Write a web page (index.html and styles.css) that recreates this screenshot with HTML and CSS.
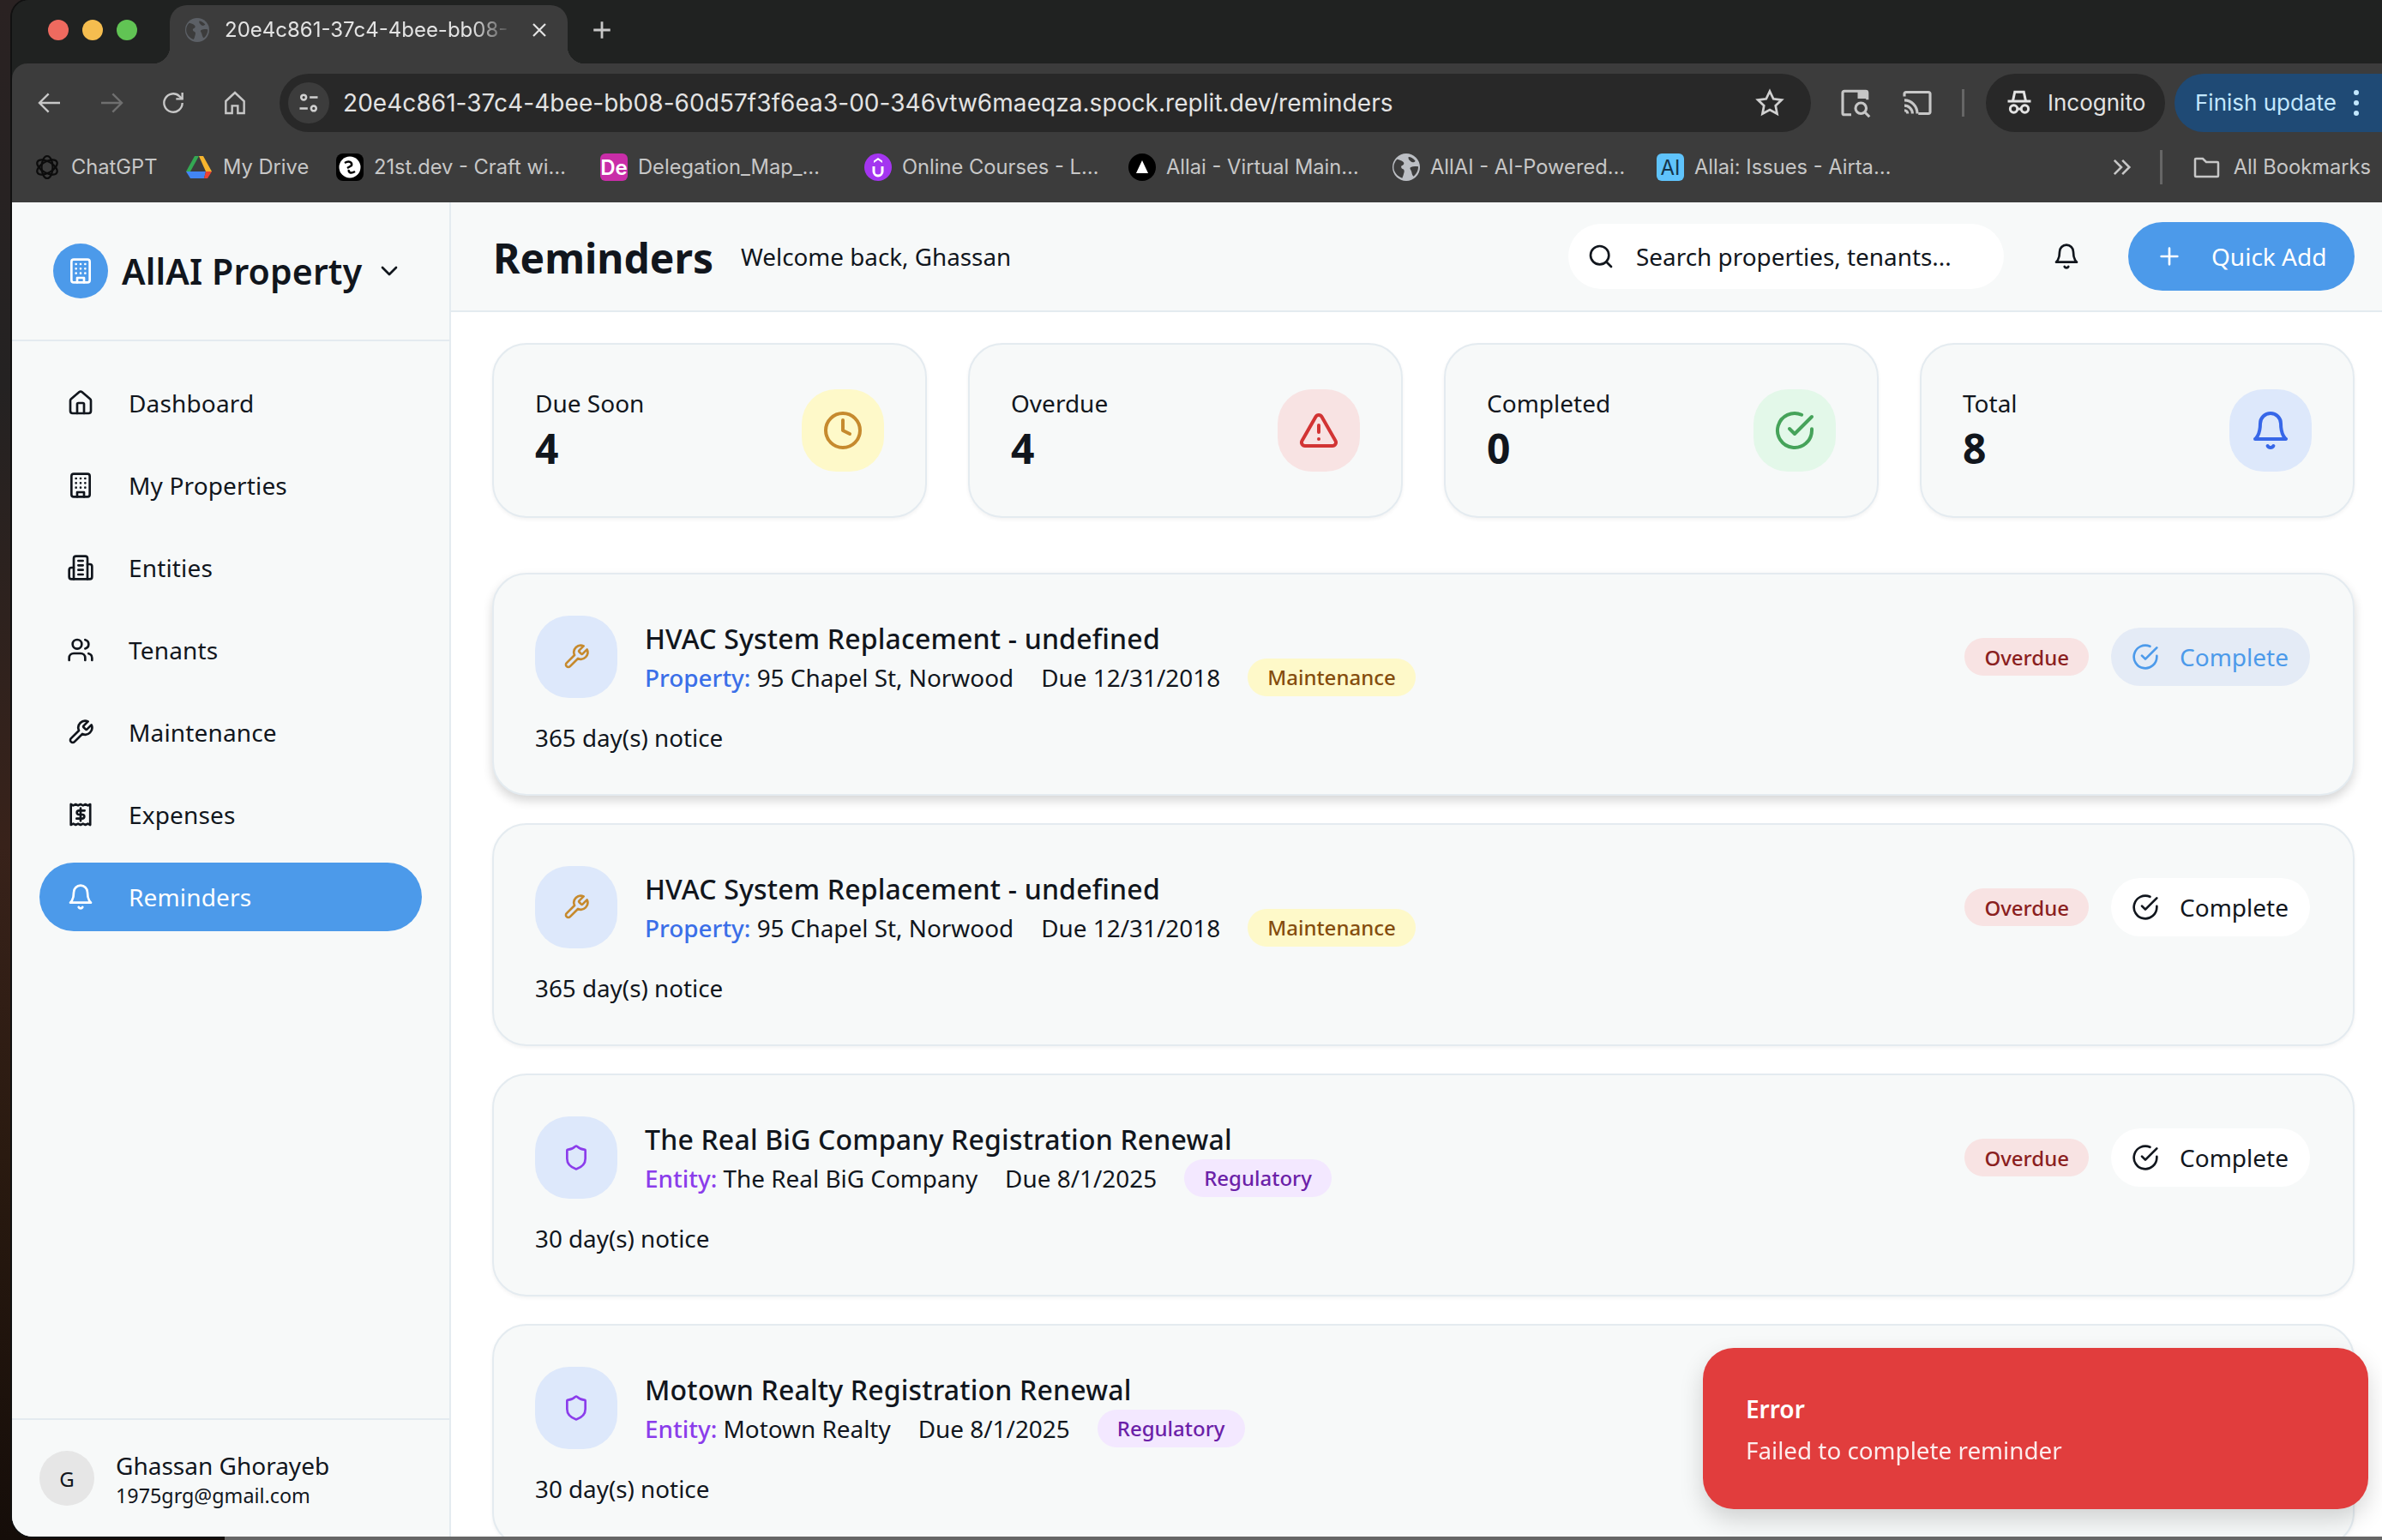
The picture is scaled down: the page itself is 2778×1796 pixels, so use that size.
FILE: index.html
```html
<!DOCTYPE html>
<html lang="en">
<head>
    <meta charset="utf-8">
    <title>Reminders</title>
    <link rel="stylesheet" href="styles.css">
</head>
<body>
<svg class="sprites" aria-hidden="true">
    <symbol id="i-home" viewBox="0 0 24 24"><path d="M15 21v-8a1 1 0 0 0-1-1h-4a1 1 0 0 0-1 1v8"/><path d="M3 10a2 2 0 0 1 .709-1.528l7-5.999a2 2 0 0 1 2.582 0l7 5.999A2 2 0 0 1 21 10v9a2 2 0 0 1-2 2H5a2 2 0 0 1-2-2z"/></symbol>
    <symbol id="i-building" viewBox="0 0 24 24"><rect x="4" y="2" width="16" height="20" rx="2"/><path d="M9 22v-4h6v4"/><path d="M8 6h.01M12 6h.01M16 6h.01M8 10h.01M12 10h.01M16 10h.01M8 14h.01M12 14h.01M16 14h.01"/></symbol>
    <symbol id="i-entities" viewBox="0 0 24 24"><path d="M6 22V4a2 2 0 0 1 2-2h8a2 2 0 0 1 2 2v18Z"/><path d="M6 12H4a2 2 0 0 0-2 2v6a2 2 0 0 0 2 2h2"/><path d="M18 9h2a2 2 0 0 1 2 2v9a2 2 0 0 1-2 2h-2"/><path d="M10 6h4M10 10h4M10 14h4M10 18h4"/></symbol>
    <symbol id="i-users" viewBox="0 0 24 24"><path d="M16 21v-2a4 4 0 0 0-4-4H6a4 4 0 0 0-4 4v2"/><circle cx="9" cy="7" r="4"/><path d="M22 21v-2a4 4 0 0 0-3-3.87"/><path d="M16 3.13a4 4 0 0 1 0 7.75"/></symbol>
    <symbol id="i-wrench" viewBox="0 0 24 24"><path d="M14.7 6.3a1 1 0 0 0 0 1.4l1.6 1.6a1 1 0 0 0 1.4 0l3.77-3.77a6 6 0 0 1-7.94 7.94l-6.91 6.91a2.12 2.12 0 0 1-3-3l6.91-6.91a6 6 0 0 1 7.94-7.94l-3.76 3.76z"/></symbol>
    <symbol id="i-receipt" viewBox="0 0 24 24"><path d="M3.500 3v18l2.100-1 2.100 1 2.100-1 2.200 1 2.100-1 2.100 1 2.100-1 2.100 1V3l-2.100 1-2.100-1-2.100 1-2.100-1-2.200 1-2.100-1-2.100 1z"/><path d="M15.500 8.500h-5a1.750 1.750 0 0 0 0 3.500h3a1.750 1.750 0 0 1 0 3.500h-5"/><path d="M12 6.500v11"/></symbol>
    <symbol id="i-bell" viewBox="0 0 24 24"><path d="M6 8a6 6 0 0 1 12 0c0 7 3 9 3 9H3s3-2 3-9"/><path d="M10.300 21a1.940 1.940 0 0 0 3.400 0"/></symbol>
    <symbol id="i-clock" viewBox="0 0 24 24"><circle cx="12" cy="12" r="10"/><path d="M12 6v6l4 2"/></symbol>
    <symbol id="i-alert" viewBox="0 0 24 24"><path d="m21.730 18-8-14a2 2 0 0 0-3.480 0l-8 14A2 2 0 0 0 4 21h16a2 2 0 0 0 1.730-3"/><path d="M12 9v4"/><path d="M12 17h.01"/></symbol>
    <symbol id="i-check" viewBox="0 0 24 24"><path d="M22 11.080V12a10 10 0 1 1-5.930-9.140"/><path d="m9 11 3 3L22 4"/></symbol>
    <symbol id="i-shield" viewBox="0 0 24 24"><path d="M20 13c0 5-3.500 7.500-7.660 8.950a1 1 0 0 1-.67-.01C7.500 20.500 4 18 4 13V6a1 1 0 0 1 1-1c2 0 4.500-1.200 6.240-2.720a1.170 1.170 0 0 1 1.520 0C14.510 3.810 17 5 19 5a1 1 0 0 1 1 1z"/></symbol>
    <symbol id="i-search" viewBox="0 0 24 24"><circle cx="11" cy="11" r="8"/><path d="m21 21-4.300-4.300"/></symbol>
    <symbol id="i-plus" viewBox="0 0 24 24"><path d="M5 12h14M12 5v14"/></symbol>
    <symbol id="i-chevron" viewBox="0 0 24 24"><path d="m6 9 6 6 6-6"/></symbol>
    <symbol id="i-globe" viewBox="0 0 24 24"><circle cx="12" cy="12" r="12" fill="currentColor" stroke="none"/><path fill="#3c3c3c" stroke="none" d="M4 5c2 .5 4 1 5.500 2.500 1 1 .5 2.500-1 3-1.500.5-1 2.500.5 3 1.500.6 1.500 2 1 3.500-.4 1.500-.8 3-1.500 4.500C4 20 1 16 1 12c0-2.500 1-5 3-7zM14 3c2 0 4.500 1.500 6 3.500-1 1.500-3 1.500-4 .5-1-1-2.500-2-2-4zM16 12c2-1 4-1 6.500-.5.200 3-1.500 6.500-4 8.500-1.500-1-1.500-3-2-4.500-.5-1.500-2-2.500-.5-3.500z"/></symbol>
</svg>

<div class="window">
    <div class="tabstrip">
        <div class="lights">
            <span class="light red"></span>
            <span class="light yellow"></span>
            <span class="light green"></span>
        </div>
        <div class="tab">
            <svg class="tab-fav"><use href="#i-globe"/></svg>
            <span class="tab-title">20e4c861-37c4-4bee-bb08-</span>
            <svg class="tab-close" viewBox="0 0 24 24"><path d="M5 5l14 14M19 5 5 19"/></svg>
        </div>
        <svg class="tab-new" viewBox="0 0 24 24"><path d="M12 3v18M3 12h18"/></svg>
    </div>

    <div class="toolbar">
        <svg class="tool" viewBox="0 0 24 24"><path d="M21 12H4M11 4l-8 8 8 8"/></svg>
        <svg class="tool tool-off" viewBox="0 0 24 24"><path d="M3 12h17M13 4l8 8-8 8"/></svg>
        <svg class="tool" viewBox="0 0 24 24"><path d="M20 12a8 8 0 1 1-2.500-5.800L20 8.500"/><path d="M20 3v5.500h-5.500"/></svg>
        <svg class="tool" viewBox="0 0 24 24"><path d="M4 10.500 12 3l8 7.500V21h-5.500v-6.500h-5V21H4z"/></svg>
        <div class="omnibox">
            <span class="site-info">
                <svg viewBox="0 0 24 24"><circle cx="7" cy="6.500" r="2.500"/><path d="M13 6.500h8M3 17.500h8"/><circle cx="17" cy="17.500" r="2.500"/></svg>
            </span>
            <span class="url">20e4c861-37c4-4bee-bb08-60d57f3f6ea3-00-346vtw6maeqza.spock.replit.dev/reminders</span>
            <svg class="star" viewBox="0 0 24 24"><path d="m12 3 2.800 5.900 6.400.8-4.700 4.400 1.200 6.400L12 17.400l-5.700 3.100 1.200-6.400-4.700-4.400 6.400-.8z"/></svg>
        </div>
        <svg class="tool-wide" viewBox="0 0 32 32"><path d="M12 27H5.500A1.500 1.500 0 0 1 4 25.500v-19A1.500 1.500 0 0 1 5.500 5h20A1.500 1.500 0 0 1 27 6.500V13"/><path d="M18 5h9v7h-9z" fill="currentColor" stroke="none"/><circle cx="21" cy="21" r="5"/><path d="m25 25 4 4"/></svg>
        <svg class="tool-wide" viewBox="0 0 32 32"><path d="M4 10V7.500A1.500 1.500 0 0 1 5.500 6h21A1.500 1.500 0 0 1 28 7.500v17a1.500 1.500 0 0 1-1.500 1.500H17"/><path d="M4 13.500c6.500 0 12 5.500 12 12.500M4 18.500c4 0 7.500 3.500 7.500 7.500M4 23c1.700 0 3 1.400 3 3"/></svg>
        <span class="tool-divider"></span>
        <div class="incognito">
            <svg viewBox="0 0 24 24"><path d="M3 10.700h18"/><path d="M7 10.500 8.500 3.500h7L17 10.500"/><circle cx="7.700" cy="16.700" r="2.800"/><circle cx="16.300" cy="16.700" r="2.800"/><path d="M10.500 16.700h3"/></svg>
            <span>Incognito</span>
        </div>
        <div class="update">
            <span>Finish update</span>
            <span class="update-dots"><i></i><i></i><i></i></span>
        </div>
    </div>

    <div class="bookmarks">
        <div class="bm bm-chatgpt">
            <svg class="bm-ico" viewBox="0 0 32 32"><g fill="none" stroke="#0c0c0c" stroke-width="2.200"><ellipse cx="16" cy="16" rx="6.500" ry="13"/><ellipse cx="16" cy="16" rx="6.500" ry="13" transform="rotate(60 16 16)"/><ellipse cx="16" cy="16" rx="6.500" ry="13" transform="rotate(120 16 16)"/></g></svg>
            <span>ChatGPT</span>
        </div>
        <div class="bm bm-drive">
            <svg class="bm-ico" viewBox="0 0 32 32"><path fill="#34a853" d="M11 3h5L6 21H1z"/><path fill="#f6b52e" d="M16 3h5l10 18h-7z"/><path fill="#4285f4" d="M6 21h18l-2 8H6l-5-8z"/><path fill="#ea4335" d="M24 21h7l-5 8h-4z"/></svg>
            <span>My Drive</span>
        </div>
        <div class="bm bm-wide">
            <svg class="bm-ico" viewBox="0 0 32 32"><rect width="32" height="32" rx="8" fill="#000"/><circle cx="16" cy="16" r="12.500" fill="#fff"/><path d="M10 11c5-3 9-1 8 3l-5 3M22 21c-5 3-8 1-7-2" fill="none" stroke="#000" stroke-width="2.500"/></svg>
            <span>21st.dev - Craft wi…</span>
        </div>
        <div class="bm bm-wide">
            <span class="bm-ico bm-de">De</span>
            <span>Delegation_Map_…</span>
        </div>
        <div class="bm bm-wide">
            <svg class="bm-ico" viewBox="0 0 32 32"><circle cx="16" cy="16" r="16" fill="#a435f0"/><path d="M11 15v6a5 5 0 0 0 10 0v-6" fill="none" stroke="#fff" stroke-width="3"/><path d="m16 5 5 3.500v2.500l-5-3.500-5 3.500V8.500z" fill="#fff"/></svg>
            <span>Online Courses - L…</span>
        </div>
        <div class="bm bm-wide">
            <svg class="bm-ico" viewBox="0 0 32 32"><circle cx="16" cy="16" r="16" fill="#000"/><path d="m16 8 7 15H9z" fill="#fff"/></svg>
            <span>Allai - Virtual Main…</span>
        </div>
        <div class="bm bm-wide">
            <svg class="bm-ico bm-globe"><use href="#i-globe"/></svg>
            <span>AllAI - AI-Powered…</span>
        </div>
        <div class="bm bm-wide">
            <span class="bm-ico bm-ai">AI</span>
            <span>Allai: Issues - Airta…</span>
        </div>
        <svg class="bm-more" viewBox="0 0 24 24"><path d="m5 5 7 7-7 7M13 5l7 7-7 7"/></svg>
        <span class="bm-divider"></span>
        <div class="bm bm-all">
            <svg class="bm-folder" viewBox="0 0 32 32"><path d="M3 26V7a1 1 0 0 1 1-1h8l4 4h13a1 1 0 0 1 1 1v15a1 1 0 0 1-1 1H4a1 1 0 0 1-1-1z"/></svg>
            <span>All Bookmarks</span>
        </div>
    </div>

    <div class="app">
        <aside class="sidebar">
            <div class="brand">
                <span class="brand-logo"><svg class="ico"><use href="#i-building"/></svg></span>
                <span class="brand-name">AllAI Property</span>
                <svg class="ico brand-chev"><use href="#i-chevron"/></svg>
            </div>
            <nav class="nav">
                <a class="nav-item"><svg class="ico"><use href="#i-home"/></svg>Dashboard</a>
                <a class="nav-item"><svg class="ico"><use href="#i-building"/></svg>My Properties</a>
                <a class="nav-item"><svg class="ico"><use href="#i-entities"/></svg>Entities</a>
                <a class="nav-item"><svg class="ico"><use href="#i-users"/></svg>Tenants</a>
                <a class="nav-item"><svg class="ico"><use href="#i-wrench"/></svg>Maintenance</a>
                <a class="nav-item"><svg class="ico"><use href="#i-receipt"/></svg>Expenses</a>
                <a class="nav-item active"><svg class="ico"><use href="#i-bell"/></svg>Reminders</a>
            </nav>
            <div class="user">
                <span class="avatar">G</span>
                <div class="user-text">
                    <div class="user-name">Ghassan Ghorayeb</div>
                    <div class="user-mail">1975grg@gmail.com</div>
                </div>
            </div>
        </aside>

        <main class="main">
            <header class="header">
                <h1>Reminders</h1>
                <span class="welcome">Welcome back, Ghassan</span>
                <div class="search">
                    <svg class="ico"><use href="#i-search"/></svg>
                    <span>Search properties, tenants...</span>
                </div>
                <svg class="ico header-bell"><use href="#i-bell"/></svg>
                <button class="quick-add"><svg class="ico"><use href="#i-plus"/></svg>Quick Add</button>
            </header>

            <div class="content">
                <section class="stats">
                    <div class="stat">
                        <div>
                            <div class="stat-label">Due Soon</div>
                            <div class="stat-value">4</div>
                        </div>
                        <span class="stat-icon amber"><svg class="ico"><use href="#i-clock"/></svg></span>
                    </div>
                    <div class="stat">
                        <div>
                            <div class="stat-label">Overdue</div>
                            <div class="stat-value">4</div>
                        </div>
                        <span class="stat-icon red"><svg class="ico"><use href="#i-alert"/></svg></span>
                    </div>
                    <div class="stat">
                        <div>
                            <div class="stat-label">Completed</div>
                            <div class="stat-value">0</div>
                        </div>
                        <span class="stat-icon green"><svg class="ico"><use href="#i-check"/></svg></span>
                    </div>
                    <div class="stat">
                        <div>
                            <div class="stat-label">Total</div>
                            <div class="stat-value">8</div>
                        </div>
                        <span class="stat-icon blue"><svg class="ico"><use href="#i-bell"/></svg></span>
                    </div>
                </section>

                <section class="reminders">
                    <article class="reminder raised">
                        <div class="reminder-top">
                            <span class="reminder-icon"><svg class="ico wrench"><use href="#i-wrench"/></svg></span>
                            <div class="reminder-body">
                                <div class="reminder-title">HVAC System Replacement - undefined</div>
                                <div class="reminder-meta">
                                    <span><b class="tag-property">Property:</b> 95 Chapel St, Norwood</span>
                                    <span>Due 12/31/2018</span>
                                    <span class="pill pill-maint">Maintenance</span>
                                </div>
                            </div>
                            <span class="pill pill-overdue">Overdue</span>
                            <button class="complete hover"><svg class="ico"><use href="#i-check"/></svg>Complete</button>
                        </div>
                        <div class="reminder-note">365 day(s) notice</div>
                    </article>
                    <article class="reminder">
                        <div class="reminder-top">
                            <span class="reminder-icon"><svg class="ico wrench"><use href="#i-wrench"/></svg></span>
                            <div class="reminder-body">
                                <div class="reminder-title">HVAC System Replacement - undefined</div>
                                <div class="reminder-meta">
                                    <span><b class="tag-property">Property:</b> 95 Chapel St, Norwood</span>
                                    <span>Due 12/31/2018</span>
                                    <span class="pill pill-maint">Maintenance</span>
                                </div>
                            </div>
                            <span class="pill pill-overdue">Overdue</span>
                            <button class="complete"><svg class="ico"><use href="#i-check"/></svg>Complete</button>
                        </div>
                        <div class="reminder-note">365 day(s) notice</div>
                    </article>
                    <article class="reminder">
                        <div class="reminder-top">
                            <span class="reminder-icon"><svg class="ico shield"><use href="#i-shield"/></svg></span>
                            <div class="reminder-body">
                                <div class="reminder-title">The Real BiG Company Registration Renewal</div>
                                <div class="reminder-meta">
                                    <span><b class="tag-entity">Entity:</b> The Real BiG Company</span>
                                    <span>Due 8/1/2025</span>
                                    <span class="pill pill-reg">Regulatory</span>
                                </div>
                            </div>
                            <span class="pill pill-overdue">Overdue</span>
                            <button class="complete"><svg class="ico"><use href="#i-check"/></svg>Complete</button>
                        </div>
                        <div class="reminder-note">30 day(s) notice</div>
                    </article>
                    <article class="reminder">
                        <div class="reminder-top">
                            <span class="reminder-icon"><svg class="ico shield"><use href="#i-shield"/></svg></span>
                            <div class="reminder-body">
                                <div class="reminder-title">Motown Realty Registration Renewal</div>
                                <div class="reminder-meta">
                                    <span><b class="tag-entity">Entity:</b> Motown Realty</span>
                                    <span>Due 8/1/2025</span>
                                    <span class="pill pill-reg">Regulatory</span>
                                </div>
                            </div>
                        </div>
                        <div class="reminder-note">30 day(s) notice</div>
                    </article>
                </section>
            </div>

            <div class="toast">
                <div class="toast-title">Error</div>
                <div class="toast-text">Failed to complete reminder</div>
            </div>
        </main>
    </div>
</div>
<div class="desk-edge"></div>
</body>
</html>
```

FILE: styles.css
```css
* {
    box-sizing: border-box;
}
html, body {
    margin: 0;
    height: 1796px;
    overflow: hidden;
}
body {
    font-family: "Noto Sans", "Open Sans", sans-serif;
    color: #11161d;
    background: linear-gradient(#2a2222 0, #242222 25%, #38221a 55%, #2a1a10 75%, #150d09 100%);
}
.sprites {
    display: none;
}
.ico {
    width: 32px;
    height: 32px;
    fill: none;
    stroke: currentColor;
    stroke-width: 2;
    stroke-linecap: round;
    stroke-linejoin: round;
    flex: none;
}

/* window + browser chrome */
.window {
    margin-left: 14px;
    height: 1792px;
    border-radius: 20px 0 0 24px;
    overflow: hidden;
    display: flex;
    flex-direction: column;
    box-shadow: 0 0 0 2px #111;
    background: #202221;
}
.desk-edge {
    margin-left: 262px;
    height: 4px;
    background: #666;
}
.tabstrip {
    height: 74px;
    display: flex;
    align-items: flex-end;
    flex: none;
    background: #202221;
}
.lights {
    display: flex;
    gap: 16px;
    padding: 0 0 27px 42px;
    width: 184px;
}
.light {
    width: 24px;
    height: 24px;
    border-radius: 50%;
}
.light.red { background: #ee6a5f; }
.light.yellow { background: #f5bd4f; }
.light.green { background: #61c454; }
.tab {
    position: relative;
    width: 464px;
    height: 68px;
    background: #3c3c3c;
    border-radius: 20px 20px 0 0;
    display: flex;
    align-items: center;
    padding: 0 18px 10px;
    color: #e3e3e3;
}
.tab::before,
.tab::after {
    content: "";
    position: absolute;
    bottom: 0;
    width: 20px;
    height: 20px;
}
.tab::before {
    left: -20px;
    background: radial-gradient(circle at 0 0, #202221 20px, #3c3c3c 20.500px);
}
.tab::after {
    right: -20px;
    background: radial-gradient(circle at 100% 0, #202221 20px, #3c3c3c 20.500px);
}
.tab-fav {
    width: 28px;
    height: 28px;
    color: #5c6066;
    flex: none;
}
.tab-title {
    margin-left: 18px;
    width: 336px;
    flex: none;
    white-space: nowrap;
    font: 24px/32px Inter, sans-serif;
    -webkit-mask-image: linear-gradient(90deg, #000 86%, transparent);
    mask-image: linear-gradient(90deg, #000 86%, transparent);
}
.tab-close {
    width: 24px;
    height: 24px;
    margin-left: 19px;
    fill: none;
    stroke: currentColor;
    stroke-width: 2.200;
    flex: none;
}
.tab-new {
    width: 26px;
    height: 26px;
    margin: 0 0 26px 27px;
    fill: none;
    stroke: #c7c7c7;
    stroke-width: 2.600;
}
.toolbar {
    height: 80px;
    flex: none;
    background: #3c3c3c;
    border-radius: 18px 0 0 0;
    display: flex;
    align-items: center;
    padding: 12px 0 0 8px;
}
.tool {
    width: 32px;
    height: 32px;
    margin: 0 20px;
    fill: none;
    stroke: #c7c7c7;
    stroke-width: 1.800;
    flex: none;
}
.tool-off {
    stroke: #6f6f6f;
}
.omnibox {
    flex: 1;
    margin-left: 16px;
    height: 68px;
    border-radius: 34px;
    background: #282828;
    display: flex;
    align-items: center;
    padding-left: 10px;
    padding-right: 30px;
    min-width: 0;
}
.site-info {
    width: 48px;
    height: 48px;
    border-radius: 50%;
    background: #3c3c3c;
    display: flex;
    align-items: center;
    justify-content: center;
    flex: none;
}
.site-info svg {
    width: 28px;
    height: 28px;
    fill: none;
    stroke: #d0d0d0;
    stroke-width: 2.200;
}
.url {
    margin-left: 16px;
    flex: 1;
    font: 28px/36px Inter, sans-serif;
    letter-spacing: 0.05px;
    color: #e3e3e3;
    white-space: nowrap;
}
.star {
    width: 36px;
    height: 36px;
    fill: none;
    stroke: #d0d0d0;
    stroke-width: 1.800;
    flex: none;
}
.tool-wide {
    width: 40px;
    height: 40px;
    margin-left: 32px;
    color: #c7c7c7;
    fill: none;
    stroke: #c7c7c7;
    stroke-width: 2.500;
    flex: none;
}
.tool-divider {
    width: 3px;
    height: 32px;
    background: #666;
    margin-left: 32px;
    flex: none;
}
.incognito {
    margin-left: 25px;
    width: 209px;
    height: 68px;
    border-radius: 34px;
    background: #282828;
    display: flex;
    align-items: center;
    gap: 15px;
    padding-left: 21px;
    color: #e3e3e3;
    font: 26px/34px Inter, sans-serif;
    flex: none;
}
.incognito svg {
    width: 36px;
    height: 36px;
    fill: none;
    stroke: currentColor;
    stroke-width: 2;
    flex: none;
}
.update {
    margin-left: 11px;
    width: 242px;
    height: 68px;
    border-radius: 34px 0 0 34px;
    background: #1f4a75;
    color: #c2e7ff;
    display: flex;
    align-items: center;
    padding-left: 24px;
    font: 26px/34px Inter, sans-serif;
    flex: none;
}
.update-dots {
    margin-left: 20px;
    display: flex;
    flex-direction: column;
    gap: 6px;
}
.update-dots i {
    width: 6px;
    height: 6px;
    border-radius: 50%;
    background: #c2e7ff;
}
.bookmarks {
    height: 82px;
    flex: none;
    background: #3c3c3c;
    display: flex;
    align-items: center;
    padding-left: 25px;
    font: 23.700px/32px Inter, sans-serif;
    color: #c7c7c7;
}
.bm {
    display: flex;
    align-items: center;
    gap: 12px;
    white-space: nowrap;
    flex: none;
}
.bm-chatgpt { width: 177px; }
.bm-drive { width: 176px; }
.bm-wide { width: 308px; }
.bm-ico {
    width: 32px;
    height: 32px;
    flex: none;
}
.bm-de,
.bm-ai {
    border-radius: 6px;
    display: flex;
    align-items: flex-end;
    justify-content: center;
    font-size: 24px;
    line-height: 30px;
}
.bm-de {
    background: #c92da8;
    color: #fff;
    font-weight: 600;
}
.bm-ai {
    background: #5fc3fb;
    color: #14344a;
}
.bm-globe {
    color: #bcbfc4;
}
.bm-more {
    width: 28px;
    height: 28px;
    margin-left: auto;
    fill: none;
    stroke: #c7c7c7;
    stroke-width: 2.200;
    flex: none;
}
.bm-divider {
    width: 3px;
    height: 40px;
    background: #666;
    margin: 0 35px 0 31px;
    flex: none;
}
.bm-folder {
    width: 32px;
    height: 32px;
    fill: none;
    stroke: #c7c7c7;
    stroke-width: 2.500;
    flex: none;
}
.bm-all {
    gap: 16px;
    margin-right: 13px;
}

/* app */
.app {
    flex: 1;
    min-height: 0;
    display: flex;
    background: #fff;
}
.sidebar {
    width: 512px;
    flex: none;
    background: #f7f9f9;
    border-right: 2px solid #e4ebf0;
    display: flex;
    flex-direction: column;
}
.brand {
    height: 162px;
    border-bottom: 2px solid #e4ebf0;
    display: flex;
    align-items: center;
    padding-left: 48px;
    flex: none;
}
.brand-logo {
    width: 64px;
    height: 64px;
    border-radius: 50%;
    background: #4c9aea;
    color: #fff;
    display: flex;
    align-items: center;
    justify-content: center;
    flex: none;
}
.brand-name {
    margin-left: 16px;
    font-size: 41px;
    font-weight: 600;
    letter-spacing: 0.15px;
    line-height: 54px;
    white-space: nowrap;
}
.brand-chev {
    margin-left: 16px;
}
.nav {
    padding: 32px 32px 0;
    display: flex;
    flex-direction: column;
    gap: 16px;
}
.nav-item {
    height: 80px;
    border-radius: 40px;
    display: flex;
    align-items: center;
    gap: 40px;
    padding-left: 32px;
    font-size: 28px;
    letter-spacing: 0.15px;
}
.nav-item.active {
    background: #4c9aea;
    color: #fff;
}
.user {
    margin-top: auto;
    height: 138px;
    flex: none;
    border-top: 2px solid #e4ebf0;
    padding: 0 32px;
    display: flex;
    align-items: center;
    gap: 25px;
}
.avatar {
    width: 64px;
    height: 64px;
    border-radius: 50%;
    background: #e6e6e6;
    display: flex;
    align-items: center;
    justify-content: center;
    font-size: 24px;
    flex: none;
}
.user-text {
    padding-top: 4px;
}
.user-name {
    font-size: 28px;
    line-height: 36px;
}
.user-mail {
    font-size: 23.300px;
    line-height: 34px;
}
.main {
    position: relative;
    flex: 1;
    min-width: 0;
    display: flex;
    flex-direction: column;
}
.header {
    height: 128px;
    flex: none;
    background: #f7f9f9;
    border-bottom: 2px solid #e4ebf0;
    display: flex;
    align-items: center;
    padding: 0 32px 0 49px;
}
.header h1 {
    margin: 3px 0 0;
    font-size: 48px;
    font-weight: 700;
    line-height: 64px;
}
.welcome {
    margin-left: 32px;
    font-size: 27.800px;
}
.search {
    margin-left: auto;
    width: 508px;
    height: 76px;
    border-radius: 38px;
    background: #fff;
    display: flex;
    align-items: center;
    gap: 25px;
    padding-left: 22px;
    font-size: 27.900px;
}
.header-bell {
    margin: 0 56px 0 57px;
}
.quick-add {
    height: 80px;
    width: 264px;
    border: 0;
    border-radius: 40px;
    background: #4c9aea;
    color: #fff;
    display: flex;
    align-items: center;
    gap: 33px;
    padding: 0 0 0 32px;
    font: 28px "Noto Sans", sans-serif;
    flex: none;
}
.content {
    padding: 36px 32px 0 48px;
    overflow: hidden;
}
.stats {
    display: grid;
    grid-template-columns: repeat(4, 1fr);
    gap: 48px;
}
.stat {
    height: 204px;
    background: #f7f9f9;
    border: 2px solid #e4ebf0;
    border-radius: 40px;
    box-shadow: 0 2px 4px rgba(0, 0, 0, 0.05);
    padding: 0 48px;
    display: flex;
    align-items: center;
    justify-content: space-between;
}
.stat-label {
    font-size: 28px;
    line-height: 38px;
}
.stat-value {
    margin-top: 4px;
    font-size: 48px;
    font-weight: 700;
    line-height: 60px;
}
.stat-icon {
    width: 96px;
    height: 96px;
    border-radius: 40px;
    display: flex;
    align-items: center;
    justify-content: center;
    flex: none;
}
.stat-icon .ico {
    width: 48px;
    height: 48px;
}
.stat-icon.amber { background: #fef9c9; color: #c68a2e; }
.stat-icon.red { background: #f8e3e3; color: #d23434; }
.stat-icon.green { background: #e3f8e9; color: #46a35a; }
.stat-icon.blue { background: #dde8fb; color: #3767e8; }
.reminders {
    margin-top: 64px;
    display: flex;
    flex-direction: column;
    gap: 32px;
}
.reminder {
    height: 260px;
    flex: none;
    background: #f7f9f9;
    border: 2px solid #e4ebf0;
    border-radius: 40px;
    box-shadow: 0 2px 4px rgba(0, 0, 0, 0.05);
    padding: 48px 50px 0 48px;
}
.reminder.raised {
    box-shadow: 0 6px 12px rgba(0, 0, 0, 0.16);
}
.reminder-top {
    display: flex;
    align-items: center;
}
.reminder-icon {
    width: 96px;
    height: 96px;
    border-radius: 40px;
    background: #dde8fb;
    display: flex;
    align-items: center;
    justify-content: center;
    flex: none;
}
.wrench { color: #c68a2e; }
.shield { color: #8b3deb; }
.reminder-body {
    margin-left: 32px;
    padding-top: 2px;
    flex: 1;
    min-width: 0;
}
.reminder-title {
    font-size: 32px;
    font-weight: 500;
    letter-spacing: 0.18px;
    line-height: 44px;
    white-space: nowrap;
}
.reminder-meta {
    margin-top: 1px;
    display: flex;
    align-items: center;
    gap: 32px;
    font-size: 27.900px;
    line-height: 44px;
    white-space: nowrap;
}
.reminder-meta b {
    font-weight: 500;
}
.tag-property { color: #3b6fe8; }
.tag-entity { color: #8b3deb; }
.pill {
    height: 44px;
    border-radius: 22px;
    padding: 0 23px;
    display: inline-flex;
    align-items: center;
    font-size: 24px;
    font-weight: 500;
    flex: none;
}
.pill-maint { background: #fef9c9; color: #854d0e; }
.pill-reg { background: #f3e8ff; color: #6b21a8; }
.pill-overdue {
    background: #f8e3e3;
    color: #8b1f1f;
}
.complete {
    margin-left: 26px;
    height: 68px;
    width: 232px;
    border: 0;
    border-radius: 34px;
    background: #fff;
    color: #11161d;
    display: flex;
    align-items: center;
    gap: 24px;
    padding: 0 0 0 24px;
    font: 28px "Noto Sans", sans-serif;
    flex: none;
}
.complete.hover {
    background: #e4ebf6;
    color: #4c9aea;
}
.reminder-note {
    margin-top: 28px;
    font-size: 27.800px;
    line-height: 36px;
}
.toast {
    position: absolute;
    left: 1460px;
    top: 1336px;
    width: 776px;
    height: 188px;
    border-radius: 36px;
    background: #e13d3d;
    color: #fff;
    padding: 51px 50px 0;
    box-shadow: 0 12px 28px rgba(0, 0, 0, 0.16);
}
.toast-title {
    font-size: 28px;
    font-weight: 600;
    line-height: 40px;
}
.toast-text {
    margin-top: 8px;
    font-size: 27.800px;
    line-height: 40px;
    opacity: 0.9;
}
```
